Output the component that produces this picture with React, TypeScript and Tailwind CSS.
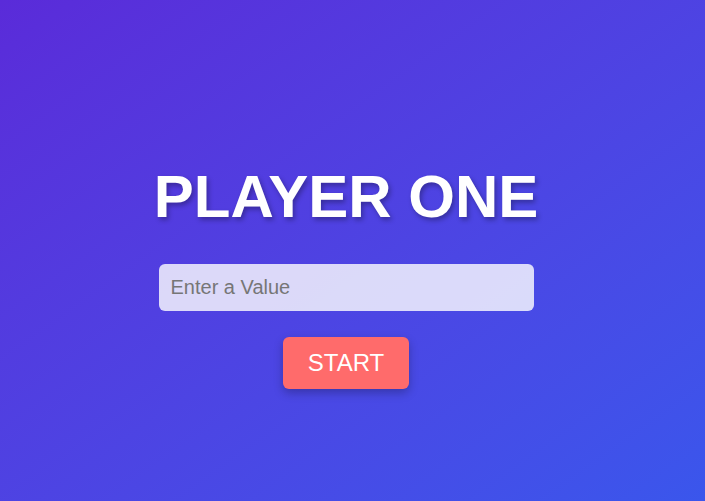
export default function App() {
  return (
    <main className="min-h-screen w-full bg-gradient-to-br from-[#5a2bd9] to-[#3a56ec] font-['Liberation_Sans',Arial,sans-serif]">
      <div className="w-[692px] pt-[167px] flex flex-col items-center">
        {/* Title */}
        <h1 className="text-[60px] leading-[60px] font-bold text-white [text-shadow:2px_3px_5px_rgba(0,0,0,0.3)]">
          PLAYER ONE
        </h1>

        {/* Value input */}
        <input
          type="text"
          placeholder="Enter a Value"
          className="mt-[37px] w-[375px] h-[47px] rounded-[6px] bg-white/80 px-3 text-[20px] text-gray-700 placeholder:text-[#767676] outline-none"
        />

        <button className="mt-[26px] w-[126px] h-[52px] rounded-[6px] bg-[#ff6b6b] text-[24px] text-white shadow-[0_4px_10px_rgba(0,0,0,0.25)]">
          START
        </button>
      </div>
    </main>
  );
}
